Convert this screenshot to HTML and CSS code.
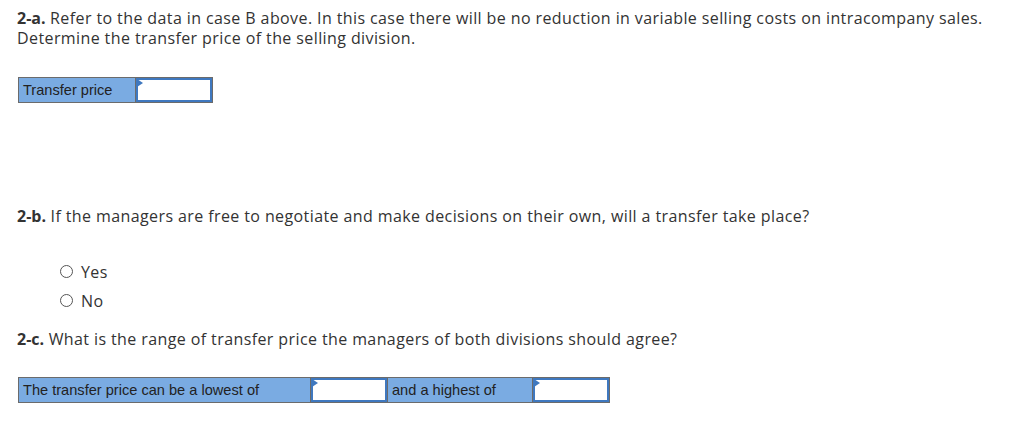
FILE: index.html
```html
<!DOCTYPE html>
<html>
<head>
<meta charset="utf-8">
<link rel="stylesheet" href="styles.css">
</head>
<body>
<div class="page">
  <p class="q q-a"><b>2-a.</b> Refer to the data in case B above. In this case there will be no reduction in variable selling costs on intracompany sales. Determine the transfer price of the selling division.</p>
  <table class="grid grid-a">
    <tr>
      <td class="label w118">Transfer price</td>
      <td class="cell w76"><span class="inp"><span class="flag"></span></span></td>
    </tr>
  </table>

  <p class="q q-b"><b>2-b.</b> If the managers are free to negotiate and make decisions on their own, will a transfer take place?</p>
  <div class="radios">
    <label class="radio"><span class="circle"></span>Yes</label>
    <label class="radio"><span class="circle"></span>No</label>
  </div>

  <p class="q q-c"><b>2-c.</b> What is the range of transfer price the managers of both divisions should agree?</p>
  <table class="grid grid-c">
    <tr>
      <td class="label w293">The transfer price can be a lowest of</td>
      <td class="cell w76"><span class="inp"><span class="flag"></span></span></td>
      <td class="label w146">and a highest of</td>
      <td class="cell w76"><span class="inp"><span class="flag"></span></span></td>
    </tr>
  </table>
</div>
</body>
</html>
```
FILE: styles.css
```css
html, body { margin: 0; padding: 0; background: #fff; }
.page {
  padding: 0 17px;
  font-family: "Open Sans", "Lato", sans-serif;
  font-size: 16px;
  letter-spacing: 0.4px;
  color: #333;
}
.q { margin: 0; line-height: 20px; }
.q b { font-weight: 700; letter-spacing: 0; }
.q-a { padding-top: 8px; }
.q-b { margin-top: 103px; }
.q-c { margin-top: 14px; }

.grid {
  border-collapse: collapse;
  font-family: "Liberation Sans", Arial, sans-serif;
  font-size: 14.6px;
  letter-spacing: 0;
  color: #222;
  margin-left: 1px;
}
.grid td { border: 1px solid #6b6b6b; padding: 0; height: 24px; vertical-align: middle; }
.grid-a { margin-top: 29px; }
.grid-c { margin-top: 28px; }
.label { background: #7aabe2; padding: 0 4px !important; white-space: nowrap; }
.w118 { width: 108px; }
.w293 { width: 283px; }
.w146 { width: 136px; }
.w76 { width: 76px; }
.cell { background: #fff; }
.inp {
  display: block;
  position: relative;
  height: 24px;
  border: 2px solid #3f78bf;
  box-sizing: border-box;
  background: #fff;
}
.flag {
  position: absolute;
  left: -1px; top: -1px;
  width: 0; height: 0;
  border-top: 4px solid transparent;
  border-bottom: 4px solid transparent;
  border-left: 6px solid #3f78bf;
}

.radios { margin-top: 31px; margin-left: 43px; }
.radio { display: flex; align-items: center; height: 29px; }
.circle {
  width: 13px; height: 13px;
  border: 1px solid #555;
  border-radius: 50%;
  box-sizing: border-box;
  margin-right: 8px;
}
```
